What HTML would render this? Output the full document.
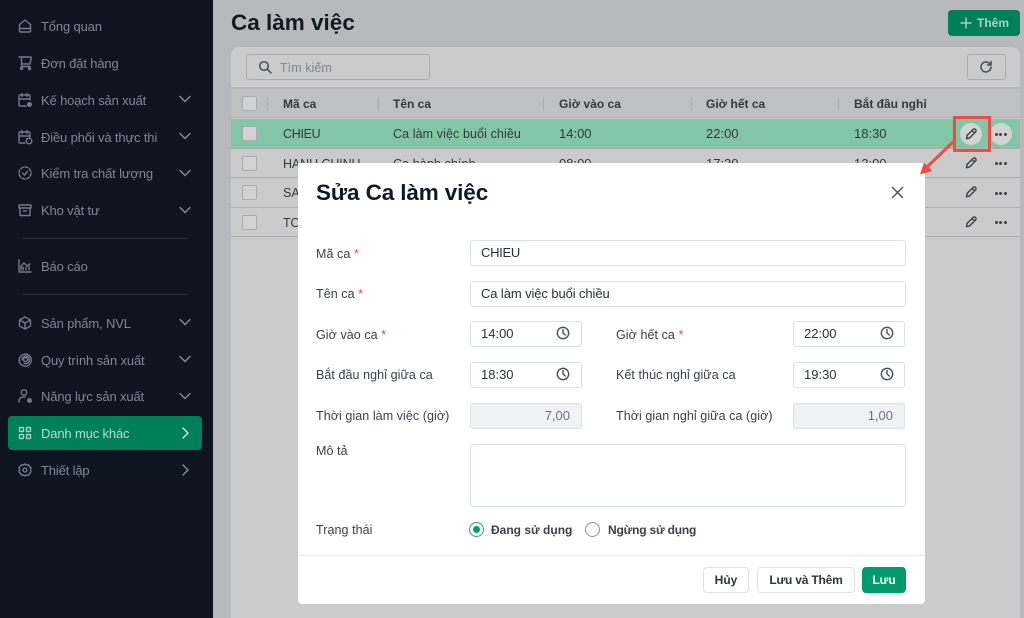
<!DOCTYPE html>
<html lang="vi"><head><meta charset="utf-8"><title>Ca làm việc</title>
<style>
*{box-sizing:border-box}
html,body{margin:0;padding:0;width:1024px;height:618px;overflow:hidden;background:#b8b9bc;font-family:"Liberation Sans","Noto Sans CJK SC",sans-serif}
.a{position:absolute}
.t{position:absolute;white-space:nowrap;line-height:16px;font-size:13px;color:#2a2f38}
.n{color:#7f8794;font-size:13px;left:41px;letter-spacing:-.15px;margin-top:1px}
svg{position:absolute;fill:none;stroke-linecap:round;stroke-linejoin:round}
.ni{stroke:#727a87;stroke-width:1.4;left:17px;width:16px;height:16px}
.ch{stroke:#7f8794;stroke-width:1.5;left:178px;width:14px;height:14px}
.cb{position:absolute;left:242px;width:15px;height:15px;background:#d2d2d2;border:1px solid #a9aaad;border-radius:2px}
.sep{position:absolute;top:97px;width:1px;height:14px;background:#a9abae}
.row{position:absolute;left:231px;width:789px;height:1px;background:#adafb2}
.h{font-weight:bold;font-size:12px;color:#33373e;top:96px}
.c{color:#343840;font-size:12.5px;letter-spacing:.1px}
.tm{font-size:13px;letter-spacing:0}
.l{color:#3a404a;font-size:12.5px;left:316px;letter-spacing:.07px}
.l2{left:616px}
.i{position:absolute;height:26px;background:#fff;border:1px solid #dbe0e6;border-radius:3px;font-size:13px;line-height:24px;padding-left:10px;color:#2b3038;white-space:nowrap}
.d{background:#f1f2f4;text-align:right;padding:0 11px 0 0;color:#6c7280}
.ck{stroke:#4a505b;stroke-width:1.4;width:14px;height:14px}
.pen{stroke:#3f444c;stroke-width:1.5;width:14px;height:14px}
.dots{position:absolute;width:14px;height:4px}
.dots i{position:absolute;top:.5px;width:3px;height:3px;border-radius:50%;background:#3f444c}
.dots i:nth-child(1){left:0}.dots i:nth-child(2){left:4.5px}.dots i:nth-child(3){left:9px}
.btn{position:absolute;top:567px;height:26px;background:#fff;border:1px solid #dde1e6;border-radius:4px;text-align:center;font-size:12px;font-weight:bold;line-height:24px;color:#2f343c}
.r{font-size:12px;font-weight:bold;color:#3a404a;top:522px}
b.s{color:#e5484d;font-weight:normal}
</style></head><body>

<!-- sidebar -->
<div class="a" style="left:0;top:0;width:213px;height:618px;background:#0e1520"></div>
<div class="a" style="left:8px;top:416px;width:194px;height:34px;background:#007f5b;border-radius:4px"></div>
<div class="a" style="left:23px;top:238px;width:164px;height:1px;background:#2b313b"></div>
<div class="a" style="left:23px;top:294px;width:164px;height:1px;background:#2b313b"></div>

<svg class="ni" style="top:18px" viewBox="0 0 16 16"><path d="M2.5 6.5 8 2l5.5 4.5V13a1 1 0 0 1-1 1h-9a1 1 0 0 1-1-1zM2.5 10.5h11"/></svg>
<svg class="ni" style="top:55px" viewBox="0 0 16 16"><path d="M2 2h12v2.5L13 9H5M4.500 2v9.500H13"/><circle cx="4.500" cy="13.500" r="1"/><circle cx="12.500" cy="13.500" r="1"/></svg>
<svg class="ni" style="top:92px" viewBox="0 0 16 16"><path d="M9 14H3a1 1 0 0 1-1-1V4a1 1 0 0 1 1-1h9a1 1 0 0 1 1 1v4M2 7h11M5 1.500v3M10 1.500v3"/><circle cx="12.500" cy="12.500" r="1.800" fill="#727a87"/></svg>
<svg class="ni" style="top:129px" viewBox="0 0 16 16"><path d="M8 14H3a1 1 0 0 1-1-1V4a1 1 0 0 1 1-1h9a1 1 0 0 1 1 1v4M2 7h11M5 1.500v3M10 1.500v3"/><circle cx="12" cy="12" r="2.800"/></svg>
<svg class="ni" style="top:165px" viewBox="0 0 16 16"><circle cx="8" cy="8" r="6" stroke-dasharray="3 1.700"/><path d="M5.500 8l2 2 3-3.500"/></svg>
<svg class="ni" style="top:202px" viewBox="0 0 16 16"><path d="M2 3h12v3H2zM3 6v7.500h10V6M6.500 9h3"/></svg>
<svg class="ni" style="top:258px" viewBox="0 0 16 16"><path d="M2 2v12h12M4 12V8l3-3 3 3 3-2M6 12V9M9 12V9.500M12 12V8.500"/></svg>
<svg class="ni" style="top:315px" viewBox="0 0 16 16"><path d="M8 2l5.500 3v6L8 14l-5.500-3V5zM2.500 5 8 8l5.500-3M8 8v6"/></svg>
<svg class="ni" style="top:352px" viewBox="0 0 16 16"><circle cx="8.500" cy="7.500" r="2"/><path d="M3 11a6 6 0 1 1 3 2.700M5 8a3.700 3.700 0 1 1 2 3.200M2 8.500a6.500 6.500 0 0 0 5 5.500"/></svg>
<svg class="ni" style="top:388px" viewBox="0 0 16 16"><circle cx="7" cy="4.500" r="2.700"/><path d="M2 14v-1.500A4 4 0 0 1 6 9h2"/><circle cx="12.500" cy="12.500" r="1.800" fill="#727a87"/></svg>
<svg class="ni" style="top:425px;stroke:#9fd3bf" viewBox="0 0 16 16"><rect x="2.500" y="2.500" width="4" height="4" rx=".6"/><rect x="9.500" y="2.500" width="4" height="4" rx=".6"/><rect x="2.500" y="9.500" width="4" height="4" rx=".6"/><rect x="9.500" y="9.500" width="4" height="4" rx=".6"/></svg>
<svg class="ni" style="top:462px" viewBox="0 0 16 16"><circle cx="8" cy="8" r="2"/><path d="M8 2l1.500 1 2-.3 1 1.700 1.500 1.300-.5 2.300.5 2-1.500 1.500-1 1.700-2-.2L8 14l-1.500-1-2 .2-1-1.700L2 10l.5-2L2 5.700l1.500-1.300 1-1.700 2 .3z"/></svg>

<div class="t n" style="top:18px">Tổng quan</div>
<div class="t n" style="top:55px">Đơn đặt hàng</div>
<div class="t n" style="top:92px">Kế hoạch sản xuất</div>
<div class="t n" style="top:129px">Điều phối và thực thi</div>
<div class="t n" style="top:165px">Kiểm tra chất lượng</div>
<div class="t n" style="top:202px">Kho vật tư</div>
<div class="t n" style="top:258px">Báo cáo</div>
<div class="t n" style="top:315px">Sản phẩm, NVL</div>
<div class="t n" style="top:352px">Quy trình sản xuất</div>
<div class="t n" style="top:388px">Năng lực sản xuất</div>
<div class="t n" style="top:425px;color:#b5ddcd">Danh mục khác</div>
<div class="t n" style="top:462px">Thiết lập</div>

<svg class="ch" style="top:92px" viewBox="0 0 14 14"><path d="M2 4.500 7 9.500l5-5"/></svg>
<svg class="ch" style="top:129px" viewBox="0 0 14 14"><path d="M2 4.500 7 9.500l5-5"/></svg>
<svg class="ch" style="top:166px" viewBox="0 0 14 14"><path d="M2 4.500 7 9.500l5-5"/></svg>
<svg class="ch" style="top:203px" viewBox="0 0 14 14"><path d="M2 4.500 7 9.500l5-5"/></svg>
<svg class="ch" style="top:315px" viewBox="0 0 14 14"><path d="M2 4.500 7 9.500l5-5"/></svg>
<svg class="ch" style="top:352px" viewBox="0 0 14 14"><path d="M2 4.500 7 9.500l5-5"/></svg>
<svg class="ch" style="top:389px" viewBox="0 0 14 14"><path d="M2 4.500 7 9.500l5-5"/></svg>
<svg class="ch" style="top:426px;stroke:#c2e3d6" viewBox="0 0 14 14"><path d="M5 2l5 5-5 5"/></svg>
<svg class="ch" style="top:463px" viewBox="0 0 14 14"><path d="M5 2l5 5-5 5"/></svg>

<!-- page header -->
<div class="t" style="left:231px;top:8px;line-height:30px;font-size:22.5px;font-weight:bold;color:#111926">Ca làm việc</div>
<div class="a" style="left:948px;top:10px;width:72px;height:26px;background:#007f5b;border-radius:4px"></div>
<svg style="left:960px;top:17px;stroke:#9fd0bd;stroke-width:1.5;width:12px;height:12px" viewBox="0 0 12 12"><path d="M6 1v10M1 6h10"/></svg>
<div class="t" style="left:977px;top:15px;color:#a6d4c3;font-size:12px;font-weight:bold">Thêm</div>

<!-- panel -->
<div class="a" style="left:231px;top:47px;width:789px;height:571px;background:#cbcbcb;border-radius:8px 8px 0 0"></div>
<div class="a" style="left:231px;top:87px;width:789px;height:31px;background:#bfc0c2;border-top:2px solid #b8b9bb;border-bottom:1px solid #aeb0b3"></div>
<div class="a" style="left:246px;top:54px;width:184px;height:26px;border:1px solid #a9abae;border-radius:3px;background:#cbcbcb"></div>
<svg style="left:258px;top:60px;stroke:#494e57;stroke-width:1.5;width:14px;height:14px" viewBox="0 0 14 14"><circle cx="6" cy="6" r="4.300"/><path d="M9.300 9.300 13 13"/></svg>
<div class="t" style="left:280px;top:60px;color:#83878e;font-size:12.5px;letter-spacing:.05px">Tìm kiếm</div>
<div class="a" style="left:967px;top:54px;width:39px;height:26px;border:1px solid #a9abae;border-radius:3px"></div>
<svg style="left:979px;top:60px;stroke:#494e57;stroke-width:1.5;width:14px;height:14px" viewBox="0 0 14 14"><path d="M12 7a5 5 0 1 1-1.500-3.600L12 5M12 1.500V5H8.500"/></svg>

<div class="a" style="left:231px;top:119px;width:789px;height:29px;background:#82c5a7"></div>
<div class="row" style="top:148px"></div><div class="row" style="top:177px"></div><div class="row" style="top:207px"></div><div class="row" style="top:236px"></div>

<div class="cb" style="top:96px"></div><div class="cb" style="top:126px"></div><div class="cb" style="top:156px"></div><div class="cb" style="top:185px"></div><div class="cb" style="top:215px"></div>
<div class="sep" style="left:267px"></div><div class="sep" style="left:378px"></div><div class="sep" style="left:543px"></div><div class="sep" style="left:691px"></div><div class="sep" style="left:838px"></div>

<div class="t h" style="left:283px">Mã ca</div>
<div class="t h" style="left:393px">Tên ca</div>
<div class="t h" style="left:559px">Giờ vào ca</div>
<div class="t h" style="left:706px">Giờ hết ca</div>
<div class="t h" style="left:854px">Bắt đầu nghỉ</div>

<div class="t c" style="left:283px;top:126px;letter-spacing:-.3px">CHIEU</div>
<div class="t c" style="left:393px;top:126px">Ca làm việc buổi chiều</div>
<div class="t c tm" style="left:559px;top:126px">14:00</div>
<div class="t c tm" style="left:706px;top:126px">22:00</div>
<div class="t c tm" style="left:854px;top:126px">18:30</div>
<div class="t c" style="left:283px;top:156px;letter-spacing:-.1px">HANH CHINH</div>
<div class="t c" style="left:393px;top:156px">Ca hành chính</div>
<div class="t c tm" style="left:559px;top:156px">08:00</div>
<div class="t c tm" style="left:706px;top:156px">17:30</div>
<div class="t c tm" style="left:854px;top:156px">12:00</div>
<div class="t c" style="left:283px;top:185px">SANG</div>
<div class="t c" style="left:283px;top:215px">TOI</div>

<div class="a" style="left:960px;top:123px;width:22px;height:22px;border-radius:50%;background:#d3d3d3"></div>
<div class="a" style="left:990px;top:123px;width:22px;height:22px;border-radius:50%;background:#d3d3d3"></div>
<svg class="pen" style="left:964px;top:127px" viewBox="0 0 14 14"><path d="M2.500 11.700 3 8.500 9 2.500A1.700 1.700 0 0 1 11.500 5L5.500 11zM8 3.500 10.500 6"/></svg>
<svg class="pen" style="left:964px;top:156px" viewBox="0 0 14 14"><path d="M2.500 11.700 3 8.500 9 2.500A1.700 1.700 0 0 1 11.500 5L5.500 11zM8 3.500 10.500 6"/></svg>
<svg class="pen" style="left:964px;top:185px" viewBox="0 0 14 14"><path d="M2.500 11.700 3 8.500 9 2.500A1.700 1.700 0 0 1 11.500 5L5.500 11zM8 3.500 10.500 6"/></svg>
<svg class="pen" style="left:964px;top:215px" viewBox="0 0 14 14"><path d="M2.500 11.700 3 8.500 9 2.500A1.700 1.700 0 0 1 11.500 5L5.500 11zM8 3.500 10.500 6"/></svg>
<div class="dots" style="left:994.500px;top:132px"><i></i><i></i><i></i></div>
<div class="dots" style="left:994.500px;top:161px"><i></i><i></i><i></i></div>
<div class="dots" style="left:994.500px;top:191px"><i></i><i></i><i></i></div>
<div class="dots" style="left:994.500px;top:220px"><i></i><i></i><i></i></div>

<!-- modal -->
<div class="a" style="left:298px;top:163px;width:627px;height:441px;background:#fff;border-radius:0 0 4px 4px"></div>
<div class="t" style="left:316px;top:178px;line-height:30px;font-size:22.5px;font-weight:bold;color:#111926;letter-spacing:-.12px">Sửa Ca làm việc</div>
<svg style="left:891px;top:186px;stroke:#4f5560;stroke-width:1.5;width:13px;height:13px" viewBox="0 0 13 13"><path d="M1.500 1.500l10 10M11.500 1.500l-10 10"/></svg>

<div class="t l" style="top:246px">Mã ca <b class="s">*</b></div>
<div class="t l" style="top:286px">Tên ca <b class="s">*</b></div>
<div class="t l" style="top:327px">Giờ vào ca <b class="s">*</b></div>
<div class="t l" style="top:367px">Bắt đầu nghỉ giữa ca</div>
<div class="t l" style="top:408px">Thời gian làm việc (giờ)</div>
<div class="t l" style="top:443px">Mô tả</div>
<div class="t l" style="top:522px">Trạng thái</div>
<div class="t l l2" style="top:327px">Giờ hết ca <b class="s">*</b></div>
<div class="t l l2" style="top:367px">Kết thúc nghỉ giữa ca</div>
<div class="t l l2" style="top:408px">Thời gian nghỉ giữa ca (giờ)</div>

<div class="i" style="left:470px;top:240px;width:436px;letter-spacing:-.3px">CHIEU</div>
<div class="i" style="left:470px;top:281px;width:436px;letter-spacing:-.1px">Ca làm việc buổi chiều</div>
<div class="i" style="left:470px;top:321px;width:112px">14:00</div>
<div class="i" style="left:470px;top:362px;width:112px">18:30</div>
<div class="i d" style="left:470px;top:403px;width:112px">7,00</div>
<div class="i" style="left:793px;top:321px;width:112px">22:00</div>
<div class="i" style="left:793px;top:362px;width:112px">19:30</div>
<div class="i d" style="left:793px;top:403px;width:112px">1,00</div>
<div class="i" style="left:470px;top:444px;width:436px;height:63px"></div>

<svg class="ck" style="left:556px;top:326px" viewBox="0 0 14 14"><circle cx="7" cy="7" r="5.700"/><path d="M7 3.500V7l2.300 2"/></svg>
<svg class="ck" style="left:556px;top:367px" viewBox="0 0 14 14"><circle cx="7" cy="7" r="5.700"/><path d="M7 3.500V7l2.300 2"/></svg>
<svg class="ck" style="left:880px;top:326px" viewBox="0 0 14 14"><circle cx="7" cy="7" r="5.700"/><path d="M7 3.500V7l2.300 2"/></svg>
<svg class="ck" style="left:880px;top:367px" viewBox="0 0 14 14"><circle cx="7" cy="7" r="5.700"/><path d="M7 3.500V7l2.300 2"/></svg>

<div class="a" style="left:469px;top:522px;width:15px;height:15px;border:1px solid #1fa37c;border-radius:50%"></div>
<div class="a" style="left:473px;top:526px;width:7px;height:7px;background:#009c6e;border-radius:50%"></div>
<div class="t r" style="left:491px">Đang sử dụng</div>
<div class="a" style="left:585px;top:522px;width:15px;height:15px;border:1px solid #8b9099;border-radius:50%"></div>
<div class="t r" style="left:608px;letter-spacing:-.2px">Ngừng sử dụng</div>

<div class="a" style="left:298px;top:555px;width:627px;height:1px;background:#e6e8eb"></div>
<div class="btn" style="left:703px;width:46px">Hủy</div>
<div class="btn" style="left:757px;width:98px;letter-spacing:-.2px">Lưu và Thêm</div>
<div class="btn" style="left:862px;width:44px;background:#009c6e;border-color:#009c6e;color:#fff">Lưu</div>

<!-- annotation -->
<div class="a" style="left:953px;top:116px;width:38px;height:36px;border:3px solid #ee4d45"></div>
<svg style="left:915px;top:140px;width:42px;height:38px" viewBox="0 0 42 38"><path d="M38 2 11 28" stroke="#ee4d45" stroke-width="3"/><path d="M5 34.500l4-12 8.500 8.500z" fill="#ee4d45"/></svg>
</body></html>
